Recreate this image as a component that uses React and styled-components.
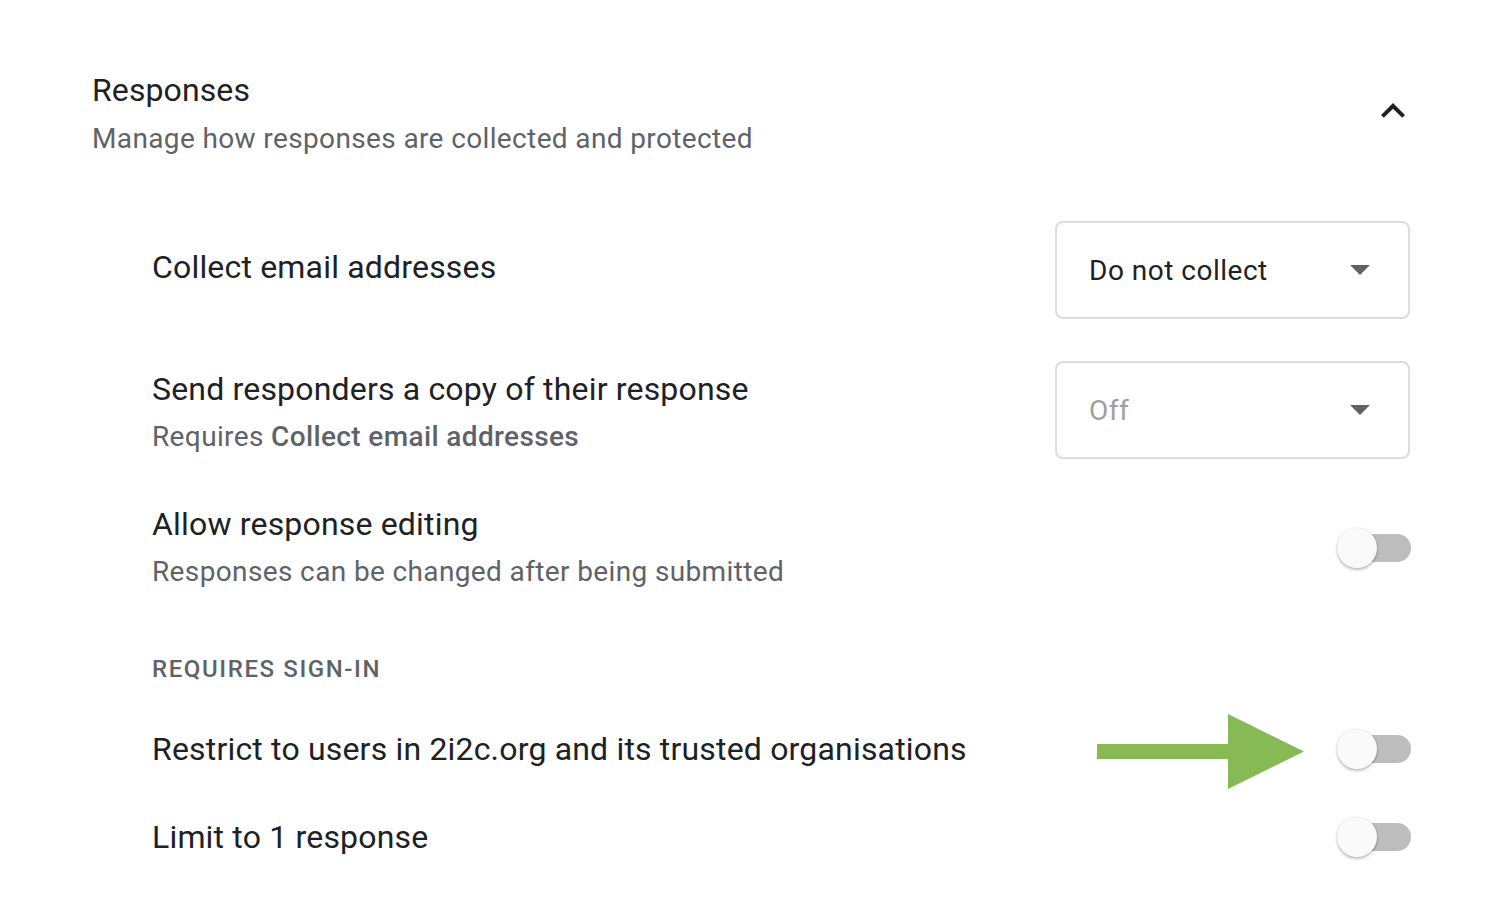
import React from "react";
import styled, { createGlobalStyle } from "styled-components";

const GlobalStyle = createGlobalStyle`
  html, body {
    margin: 0;
    padding: 0;
    background: #fff;
    font-family: Roboto, "Liberation Sans", Arial, sans-serif;
    -webkit-font-smoothing: antialiased;
  }
`;

const Page = styled.div`
  width: 1492px;
  box-sizing: border-box;
  padding: 66px 82px 0 92px;
`;

const Header = styled.div`
  display: flex;
  justify-content: space-between;
  align-items: flex-start;
`;

const Title = styled.div`
  font-size: 32px;
  line-height: 48px;
  color: #202124;
  letter-spacing: 0.1px;
`;

const Subtitle = styled.div`
  font-size: 28px;
  line-height: 48px;
  color: #5f6368;
  letter-spacing: 0.37px;
  margin-top: 1px;
`;

const CollapseButton = styled.button`
  width: 48px;
  height: 48px;
  margin: 21px -7px 0 0;
  padding: 0;
  border: none;
  background: none;
  display: flex;
  align-items: center;
  justify-content: center;
  color: #202124;
`;

const List = styled.div`
  display: flex;
  flex-direction: column;
  padding-left: 60px;
  margin-top: 37px;
`;

const Row = styled.div`
  display: flex;
  align-items: center;
  justify-content: space-between;
  padding: ${(p) => p.$pad || "21px 0"};
`;

const Label = styled.div`
  font-size: 32px;
  line-height: 48px;
  color: #202124;
  letter-spacing: 0.18px;
`;

const Hint = styled.div`
  font-size: 28px;
  line-height: 48px;
  color: #5f6368;
  letter-spacing: 0.37px;
  b {
    font-weight: 500;
    color: #5f6368;
  }
`;

// nudges the text against the control without changing the row height
const TextBlock = styled.div`
  margin-top: ${(p) => p.$shift || 0}px;
  margin-bottom: ${(p) => -(p.$shift || 0)}px;
`;

const SectionLabel = styled.div`
  font-size: 24px;
  line-height: 40px;
  font-weight: 500;
  color: #5f6368;
  letter-spacing: 1.6px;
  text-transform: uppercase;
  margin: 53px 0 16px;
`;

const Select = styled.div`
  width: 355px;
  height: 98px;
  box-sizing: border-box;
  border: 2px solid #dadce0;
  border-radius: 8px;
  display: flex;
  align-items: center;
  justify-content: space-between;
  padding: 0 38px 0 32px;
  font-size: 28px;
  letter-spacing: 0.5px;
  color: ${(p) => (p.$disabled ? "#9e9e9e" : "#202124")};
  flex-shrink: 0;
`;

const Caret = styled.span`
  width: 0;
  height: 0;
  border-left: 10px solid transparent;
  border-right: 10px solid transparent;
  border-top: 10px solid #5f6368;
`;

const Controls = styled.div`
  display: flex;
  align-items: center;
  gap: 33px;
`;

const ArrowWrap = styled.div`
  display: flex;
  margin: -11px 0 -16px;
`;

const Switch = styled.div`
  position: relative;
  width: 74px;
  height: 40px;
  margin-right: -1px;
  flex-shrink: 0;
`;

const Track = styled.div`
  position: absolute;
  left: 6px;
  right: 0;
  top: 6px;
  height: 28px;
  border-radius: 14px;
  background: #bdbdbd;
`;

const Thumb = styled.div`
  position: absolute;
  left: 0;
  top: 0;
  width: 40px;
  height: 40px;
  border-radius: 50%;
  background: #fafafa;
  box-shadow: 0 2px 3px rgba(0, 0, 0, 0.24), 0 0 2px rgba(0, 0, 0, 0.14);
`;

const Toggle = () => (
  <Switch>
    <Track />
    <Thumb />
  </Switch>
);

const GreenArrow = () => (
  <ArrowWrap>
    <svg width="207" height="75" viewBox="0 0 207 75">
      <path d="M0 30H131V0L207 37.5L131 75V45H0Z" fill="#87b955" />
    </svg>
  </ArrowWrap>
);

const ChevronUp = () => (
  <svg width="48" height="48" viewBox="0 0 24 24">
    <path d="M12 8l-6 6 1.41 1.41L12 10.83l4.59 4.58L18 14z" fill="currentColor" />
  </svg>
);

export default function App() {
  return (
    <>
      <GlobalStyle />
      <Page>
        <Header>
          <div>
            <Title>Responses</Title>
            <Subtitle>Manage how responses are collected and protected</Subtitle>
          </div>
          <CollapseButton aria-label="Collapse">
            <ChevronUp />
          </CollapseButton>
        </Header>

        <List>
          <Row>
            <TextBlock $shift={-3}>
              <Label>Collect email addresses</Label>
            </TextBlock>
            <Select>
              Do not collect
              <Caret />
            </Select>
          </Row>

          <Row>
            <TextBlock $shift={3}>
              <Label>Send responders a copy of their response</Label>
              <Hint>
                Requires <b>Collect email addresses</b>
              </Hint>
            </TextBlock>
            <Select $disabled>
              Off
              <Caret />
            </Select>
          </Row>

          <Row $pad="20px 0 0">
            <div>
              <Label>Allow response editing</Label>
              <Hint>Responses can be changed after being submitted</Hint>
            </div>
            <Toggle />
          </Row>

          <SectionLabel>Requires sign-in</SectionLabel>

          <Row $pad="20px 0">
            <Label>Restrict to users in 2i2c.org and its trusted organisations</Label>
            <Controls>
              <GreenArrow />
              <Toggle />
            </Controls>
          </Row>

          <Row $pad="20px 0">
            <Label>Limit to 1 response</Label>
            <Toggle />
          </Row>
        </List>
      </Page>
    </>
  );
}
